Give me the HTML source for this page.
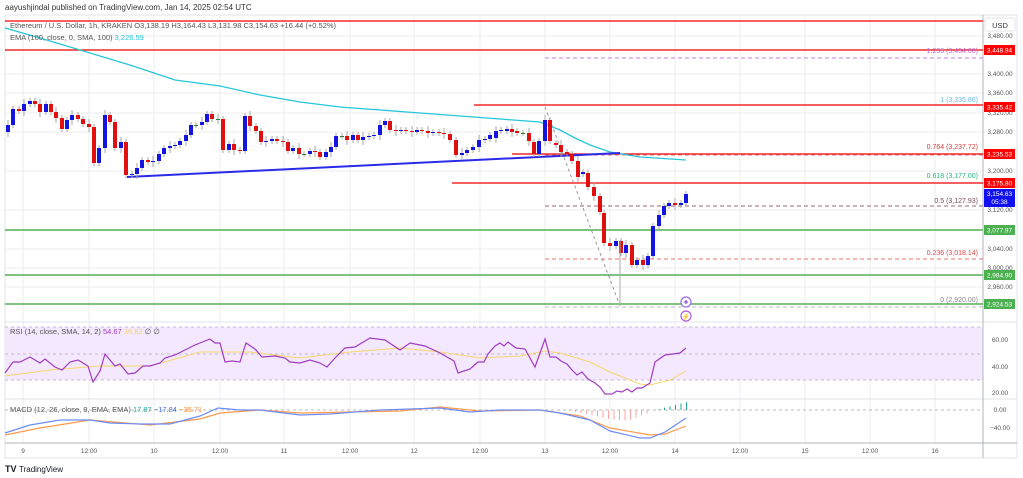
<!DOCTYPE html>
<html><head><meta charset="utf-8">
<style>
html,body{margin:0;padding:0;background:#fff;width:1023px;height:478px;overflow:hidden}
svg{display:block;font-family:"Liberation Sans",sans-serif}
</style></head><body>
<svg id="s" width="1023" height="478" viewBox="0 0 1023 478" xmlns="http://www.w3.org/2000/svg">
<text x="5" y="10" font-size="8" fill="#333">aayushjindal published on TradingView.com, Jan 14, 2025 02:54 UTC</text>
<rect x="5" y="15" width="1012" height="443" fill="#fff" stroke="#e0e3eb" stroke-width="1"/>
<g id="grid" stroke="#ececec" stroke-width="1"></g>
<!-- RSI band -->
<rect x="5" y="327" width="978" height="53" fill="#f3e8fd"/>
<line x1="5" y1="327" x2="983" y2="327" stroke="#c9b8d9" stroke-dasharray="3,3"/>
<line x1="5" y1="354" x2="983" y2="354" stroke="#c9b8d9" stroke-dasharray="3,3"/>
<line x1="5" y1="380" x2="983" y2="380" stroke="#c9b8d9" stroke-dasharray="3,3"/>
<line x1="5" y1="322" x2="1017" y2="322" stroke="#e0e3eb"/>
<line x1="5" y1="399" x2="1017" y2="399" stroke="#e0e3eb"/>
<line x1="5" y1="410" x2="983" y2="410" stroke="#bbb" stroke-dasharray="3,3"/>
<line x1="5" y1="443" x2="1017" y2="443" stroke="#b2b5be"/>
<line x1="983" y1="15" x2="983" y2="458" stroke="#b2b5be"/>
<!-- horizontal levels -->
<line x1="5" y1="21" x2="983" y2="21" stroke="#f00" stroke-width="1.3"/>
<line x1="5" y1="50" x2="983" y2="50" stroke="#e00" stroke-width="1.3"/>
<line x1="545" y1="58" x2="983" y2="58" stroke="#c77ddf" stroke-dasharray="4,3"/>
<line x1="474" y1="105" x2="983" y2="105" stroke="#e00" stroke-width="1.3"/>
<line x1="512" y1="154" x2="983" y2="154" stroke="#e00" stroke-width="1.3"/>
<line x1="545" y1="155" x2="983" y2="155" stroke="#e57373" stroke-dasharray="4,3"/>
<line x1="452" y1="183" x2="983" y2="183" stroke="#e00" stroke-width="1.3"/>
<line x1="545" y1="206" x2="983" y2="206" stroke="#9a6a7a" stroke-dasharray="4,3"/>
<line x1="5" y1="230" x2="983" y2="230" stroke="#7cc47c" stroke-width="2"/>
<line x1="545" y1="259" x2="983" y2="259" stroke="#e57373" stroke-dasharray="4,3"/>
<line x1="5" y1="275" x2="983" y2="275" stroke="#3a9e3a" stroke-width="1.3"/>
<line x1="5" y1="304" x2="983" y2="304" stroke="#3a9e3a" stroke-width="1.3"/>
<line x1="545" y1="307" x2="983" y2="307" stroke="#bbb" stroke-dasharray="4,3"/>
<line x1="545" y1="107" x2="620" y2="306" stroke="#999" stroke-dasharray="3,3"/>
<g font-size="7" text-anchor="end">
<text x="978" y="53" fill="#b96ad6">1.236 (3,434.00)</text>
<text x="978" y="102" fill="#6bb8e0">1 (3,335.86)</text>
<text x="978" y="149" fill="#d9383a">0.764 (3,237.72)</text>
<text x="978" y="178" fill="#2bb385">0.618 (3,177.00)</text>
<text x="978" y="203" fill="#7a4a5a">0.5 (3,127.93)</text>
<text x="978" y="255" fill="#e04848">0.236 (3,018.14)</text>
<text x="978" y="302" fill="#888">0 (2,920.00)</text>
</g>
<!-- EMA -->
<polyline fill="none" stroke="#26c6da" stroke-width="1.3" points="5,28 40,38 80,50 130,65 175,80 220,86 260,95 300,102 340,107 380,110 420,113 460,116 500,119 540,122 560,130 575,138 590,145 610,152 640,157 686,160"/>
<line x1="127" y1="177" x2="620" y2="153" stroke="#2a2ae8" stroke-width="2"/>
<g id="candles"></g>
<!-- RSI -->
<polyline fill="none" stroke="#f5d76e" stroke-width="1" points="5,376 50,370 100,366 150,366 200,352 250,352 300,358 350,352 400,348 440,352 480,358 520,356 545,351 560,353 590,362 610,372 640,384 650,385 670,380 686,371"/>
<polyline fill="none" stroke="#a13cc1" stroke-width="1.2" points="5,373 13,362 20,362 30,357 40,363 45,359 55,367 62,370 70,362 78,360 88,366 93,382 100,371 105,354 115,366 120,364 128,374 135,373 143,366 150,366 160,363 165,358 175,355 185,350 195,345 205,341 210,339 215,343 220,343 225,362 232,361 240,362 246,343 255,349 262,357 275,356 285,358 290,362 300,363 310,360 320,363 327,367 335,358 345,348 355,347 370,338 385,340 400,350 410,343 425,346 440,353 447,357 454,361 458,373 470,369 478,362 484,362 488,354 495,346 500,343 504,346 508,342 516,348 525,349 535,367 545,339 550,357 556,357 561,361 567,364 572,370 577,375 582,372 588,379 595,383 600,387 605,394 612,394 617,391 622,392 627,389 632,392 637,388 642,388 650,383 655,362 665,355 680,353 686,348"/>
<g id="hist"></g>
<polyline fill="none" stroke="#ff9a4d" stroke-width="1.2" points="5,435 40,428 90,420 150,425 200,419 220,413 260,410 300,413 350,412 400,411 440,407 480,411 540,410 580,416 610,428 650,435 665,434 686,426"/>
<polyline fill="none" stroke="#6b8ef5" stroke-width="1.2" points="5,433 30,425 60,420 90,420 110,423 140,424 170,424 200,416 218,408 240,410 260,410 300,415 330,414 380,410 440,408 470,412 500,410 540,410 560,413 590,420 610,431 640,438 650,438 665,432 686,418"/>
<g font-size="7.5" fill="#555">
<text x="10" y="28">Ethereum / U.S. Dollar, 1h, KRAKEN  O3,138.19  H3,164.43  L3,131.98  C3,154.63  +16.44 (+0.52%)</text>
<text x="10" y="40">EMA (100, close, 0, SMA, 100) <tspan fill="#26c6da">3,226.59</tspan></text>
<text x="10" y="334">RSI (14, close, SMA, 14, 2) <tspan fill="#a13cc1">54.67</tspan> <tspan fill="#f5d76e">36.82</tspan> ∅ ∅</text>
<text x="10" y="412">MACD (12, 26, close, 9, EMA, EMA) <tspan fill="#26a69a">17.87</tspan> <tspan fill="#4a6ee0">−17.84</tspan> <tspan fill="#ff8c3a">−35.71</tspan></text>
</g>
<circle cx="686" cy="302" r="5" fill="#fff" stroke="#9b6be8" stroke-width="1.2"/>
<circle cx="686" cy="302" r="1.8" fill="#9b6be8"/>
<circle cx="686" cy="316" r="5" fill="#fff" stroke="#b35ad6" stroke-width="1.2"/>
<text x="686" y="319" font-size="7" fill="#b35ad6" text-anchor="middle">⚡</text>
<!-- axis -->
<rect x="985" y="18" width="30" height="13" rx="2" fill="#fff" stroke="#e0e3eb"/>
<text x="1000" y="28" font-size="7.5" fill="#333" text-anchor="middle">USD</text>
<g id="axis" font-size="6.5" fill="#555" text-anchor="middle"></g>
<g id="badges" font-size="6.5" fill="#fff" text-anchor="middle"></g>
<g id="times" font-size="6.5" fill="#555" text-anchor="middle"></g>
<text x="5" y="472" font-size="9" font-weight="bold" fill="#131722">TV</text>
<text x="19" y="472" font-size="8" fill="#131722">TradingView</text>
</svg>
<script>
var NS="http://www.w3.org/2000/svg";
function el(p,t,a,txt){var e=document.createElementNS(NS,t);for(var k in a)e.setAttribute(k,a[k]);if(txt)e.textContent=txt;document.getElementById(p).appendChild(e);return e;}
var vx=[23,89,154,220,284,350,414,480,545,610,675,740,805,870,935];
var tl=["9","12:00","10","12:00","11","12:00","12","12:00","13","12:00","14","12:00","15","12:00","16"];
vx.forEach(function(x,i){el("grid","line",{x1:x,y1:15,x2:x,y2:443});el("times","text",{x:x,y:453},tl[i]);});
var py=[[36,"3,480.00"],[74,"3,400.00"],[93,"3,360.00"],[113,"3,320.00"],[132,"3,280.00"],[171,"3,200.00"],[210,"3,120.00"],[249,"3,040.00"],[268,"3,000.00"],[287,"2,960.00"]];
py.forEach(function(p){el("grid","line",{x1:5,y1:p[0],x2:983,y2:p[0]});el("axis","text",{x:1000,y:p[0]+2},p[1]);});
[[340,"60.00"],[367,"40.00"],[393,"20.00"],[410,"0.00"],[428,"−40.00"]].forEach(function(p){el("axis","text",{x:1000,y:p[0]+2},p[1]);});
[[50,"3,448.94","#f00"],[107,"3,335.42","#f00"],[154,"3,235.53","#f00"],[183,"3,175.80","#f00"],[230,"3,077.97","#4caf50"],[275,"2,984.90","#4caf50"],[304,"2,924.53","#4caf50"]].forEach(function(b){el("badges","rect",{x:984,y:b[0]-5,width:31,height:10,fill:b[2]});el("badges","text",{x:999.5,y:b[0]+2.5},b[1]);});
el("badges","rect",{x:984,y:189,width:31,height:18,fill:"#1010f0"});
el("badges","text",{x:999.5,y:196},"3,154.63");el("badges","text",{x:999.5,y:204},"05:38");
var c=[[8,132,125],[13,125,109],[19,109,111],[24,111,104],[30,104,101],[35,101,104],[40,104,112],[46,112,104],[51,104,112],[56,112,118],[62,118,129],[67,129,120],[72,120,115],[78,115,119],[83,119,124],[89,124,127],[94,127,163],[99,163,148],[105,148,115],[110,115,122],[115,122,148],[121,148,142],[126,142,175],[132,175,174],[137,174,168],[142,168,160],[148,160,162],[153,162,161],[159,161,154],[164,154,148],[170,148,146],[175,146,145],[180,145,141],[186,141,135],[191,135,125],[196,125,125],[202,125,122],[207,122,114],[212,114,119],[218,119,119],[223,119,150],[229,150,144],[234,144,150],[240,150,151],[245,151,116],[250,116,126],[256,126,131],[261,131,142],[266,142,141],[272,141,139],[277,139,141],[283,141,142],[288,142,151],[293,151,148],[299,148,154],[304,154,154],[310,154,151],[315,151,152],[320,152,157],[326,157,152],[331,152,147],[336,147,136],[342,136,136],[347,136,140],[353,140,135],[358,135,140],[363,140,137],[369,137,136],[374,136,135],[380,135,125],[385,125,121],[390,121,130],[396,130,131],[401,131,130],[406,130,131],[412,131,132],[417,132,130],[422,130,131],[428,131,133],[433,133,132],[439,132,133],[444,133,134],[450,134,140],[456,140,155],[462,155,153],[467,153,150],[473,150,147],[479,147,140],[485,140,139],[490,139,135],[496,138,131],[501,131,130],[507,131,129],[512,129,132],[517,131,133],[523,133,133],[529,133,141],[534,142,154],[539,154,141],[545,141,120],[550,120,141],[556,143,145],[561,145,152],[567,152,154],[572,154,161],[578,161,177],[583,174,172],[588,173,187],[594,187,196],[600,196,212],[604,213,243],[610,243,246],[616,246,241],[621,241,253],[626,253,245],[632,245,265],[637,265,260],[643,260,265],[648,265,256],[653,256,226],[659,226,215],[664,215,206],[669,206,203],[675,203,205],[681,205,203],[686,203,194]];
c.forEach(function(d,i){var lo=Math.min(d[1],d[2]),hi=Math.max(d[1],d[2]);var w=(i%3==0)?5:3;
el("candles","line",{x1:d[0],y1:lo-w,x2:d[0],y2:hi+w,stroke:"#aaa","stroke-width":1});
var up=d[2]<d[1];el("candles","rect",{x:d[0]-2,y:lo,width:4,height:Math.max(1,hi-lo),fill:d[1]==d[2]?"#2e7d32":(up?"#1515e0":"#e01010")});});
el("candles","line",{x1:620,y1:240,x2:620,y2:306,stroke:"#aaa"});
for(var x=570;x<=650;x+=5.5){var h=Math.min(10,(x-565)/5)*(x>630?(655-x)/25:1);el("hist","line",{x1:x,y1:410,x2:x,y2:410+h,stroke:"#f4a7a7"});}
for(var x=659;x<=688;x+=5.5){el("hist","line",{x1:x,y1:410,x2:x,y2:410-(x-655)/4,stroke:"#26a69a"});}
</script>
</body></html>
